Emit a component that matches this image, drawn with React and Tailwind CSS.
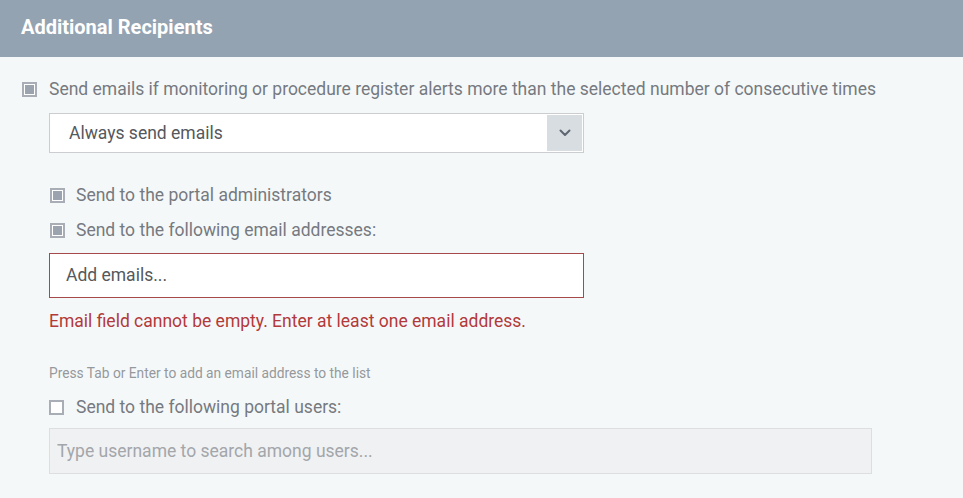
import React, { useState } from "react";

const Checkbox = ({ checked, onChange, label, className = "gap-3" }) => (
  <label className={`flex items-center cursor-pointer ${className}`}>
    <span
      onClick={onChange}
      className="w-[15px] h-[15px] border-2 border-[#a8adb6] bg-white flex items-center justify-center shrink-0"
    >
      {checked && <span className="w-[9px] h-[9px] bg-[#9ba3ae]" />}
    </span>
    <span className="text-[17.5px] text-[#767a80] leading-5">{label}</span>
  </label>
);

const App = () => {
  const [options, setOptions] = useState({
    consecutive: true,
    admins: true,
    emails: true,
    users: false,
  });

  const toggle = (key) => setOptions((prev) => ({ ...prev, [key]: !prev[key] }));

  return (
    <div className="w-[963px] h-[498px] bg-[#f5f8f9] font-['Roboto',sans-serif] overflow-hidden">
      {/* Header */}
      <div className="h-[57px] bg-[#93a3b1] flex items-center px-[21px]">
        <h2 className="text-[20px] font-bold text-white -mt-[3px]">Additional Recipients</h2>
      </div>

      <div className="pl-[22px] pt-[22px]">
        <Checkbox
          checked={options.consecutive}
          onChange={() => toggle("consecutive")}
          label="Send emails if monitoring or procedure register alerts more than the selected number of consecutive times"
        />

        <div className="ml-[27px]">
          {/* Select */}
          <div className="mt-[14px] w-[535px] h-[40px] bg-white border border-[#cbcdd0] flex items-stretch">
            <div className="flex-1 flex items-center pl-[19px] text-[17.5px] text-[#55585c]">
              Always send emails
            </div>
            <div className="w-[35px] m-[1px] bg-[#d8dde2] flex items-center justify-center">
              <svg width="12" height="8" viewBox="0 0 12 8" fill="none">
                <path d="M1.5 1.5 6 6l4.5-4.5" stroke="#5e6670" strokeWidth="2" strokeLinecap="round" strokeLinejoin="round" />
              </svg>
            </div>
          </div>

          <div className="ml-[1px] mt-[32px] flex flex-col gap-[15px]">
            <Checkbox
              className="gap-[11px]"
              checked={options.admins}
              onChange={() => toggle("admins")}
              label="Send to the portal administrators"
            />
            <Checkbox
              className="gap-[11px]"
              checked={options.emails}
              onChange={() => toggle("emails")}
              label="Send to the following email addresses:"
            />
          </div>

          {/* Email input (error state) */}
          <div className="mt-[13px] w-[535px] h-[45px] bg-white shadow-[inset_0_0_0_1px_#a5494b] flex items-center pl-[17px] text-[17.5px] text-[#55585c]">
            Add emails...
          </div>

          <p className="mt-[13px] text-[17.5px] text-[#b23a3a] leading-5">
            Email field cannot be empty. Enter at least one email address.
          </p>

          <p className="mt-[34px] text-[13.75px] text-[#95989c] leading-4">
            Press Tab or Enter to add an email address to the list
          </p>

          <Checkbox
            className="mt-[16px] gap-3"
            checked={options.users}
            onChange={() => toggle("users")}
            label="Send to the following portal users:"
          />

          {/* User search */}
          <div className="mt-[11px] w-[823px] h-[46px] bg-[#f0f1f3] border border-[#dcdee1] flex items-center pl-[7px] text-[17.5px] text-[#a3a6aa]">
            Type username to search among users...
          </div>
        </div>
      </div>
    </div>
  );
};

export default App;
